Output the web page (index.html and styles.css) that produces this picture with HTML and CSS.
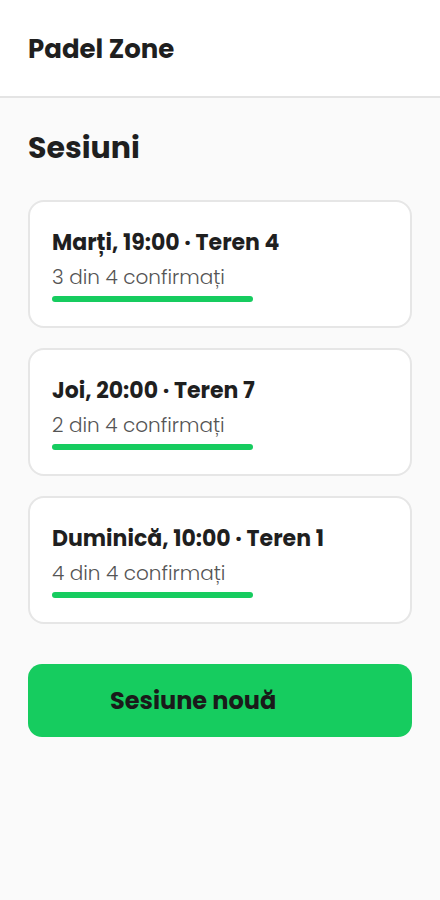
FILE: index.html
```html
<!DOCTYPE html>
<html lang="ro">
<head>
<meta charset="utf-8">
<title>Padel Zone</title>
<link rel="stylesheet" href="styles.css">
</head>
<body>
<header class="topbar">
  <h1 class="brand">Padel Zone</h1>
</header>
<main class="content">
  <h2 class="section-title">Sesiuni</h2>
  <ul class="sessions">
    <li class="card">
      <div class="card-title">Marți, 19:00 · Teren 4</div>
      <div class="card-sub">3 din 4 confirmați</div>
      <div class="bar"></div>
    </li>
    <li class="card">
      <div class="card-title">Joi, 20:00 · Teren 7</div>
      <div class="card-sub">2 din 4 confirmați</div>
      <div class="bar"></div>
    </li>
    <li class="card">
      <div class="card-title">Duminică, 10:00 · Teren 1</div>
      <div class="card-sub">4 din 4 confirmați</div>
      <div class="bar"></div>
    </li>
  </ul>
  <button class="primary">Sesiune nouă</button>
</main>
</body>
</html>
```
FILE: styles.css
```css
* { box-sizing: border-box; }
html, body { margin: 0; padding: 0; }
body {
  background: #fafafa;
  font-family: "Poppins", "Inter", "Noto Sans", sans-serif;
  color: #1f1f1f;
  min-height: 900px;
}
.topbar {
  background: #fff;
  height: 98px;
  border-bottom: 2px solid #e4e4e4;
  display: flex;
  align-items: center;
  padding: 0 28px;
}
.brand {
  margin: 0;
  font-size: 26px;
  font-weight: 700;
  line-height: 36px;
  margin-top: 2px;
}
.content {
  padding: 30px 28px;
}
.section-title {
  margin: 0 0 32px;
  font-size: 30px;
  font-weight: 700;
  line-height: 40px;
}
.sessions {
  list-style: none;
  margin: 0;
  padding: 0;
  display: flex;
  flex-direction: column;
  gap: 20px;
}
.card {
  background: #fff;
  border: 2px solid #e6e6e6;
  border-radius: 16px;
  height: 128px;
  padding: 25px 22px 0;
}
.card-title {
  font-size: 22px;
  font-weight: 700;
  line-height: 32px;
}
.card-sub {
  font-size: 20px;
  font-weight: 300;
  color: #555;
  line-height: 32px;
  margin-top: 2px;
}
.bar {
  width: 201px;
  height: 6px;
  border-radius: 3px;
  background: #16cc5f;
  margin-top: 3px;
}
.primary {
  margin-top: 40px;
  width: 100%;
  height: 73px;
  border: none;
  border-radius: 14px;
  background: #16cc5f;
  color: #1a1a1a;
  font-family: inherit;
  font-size: 24px;
  font-weight: 700;
  text-align: left;
  padding: 0 0 0 82px;
}
```
